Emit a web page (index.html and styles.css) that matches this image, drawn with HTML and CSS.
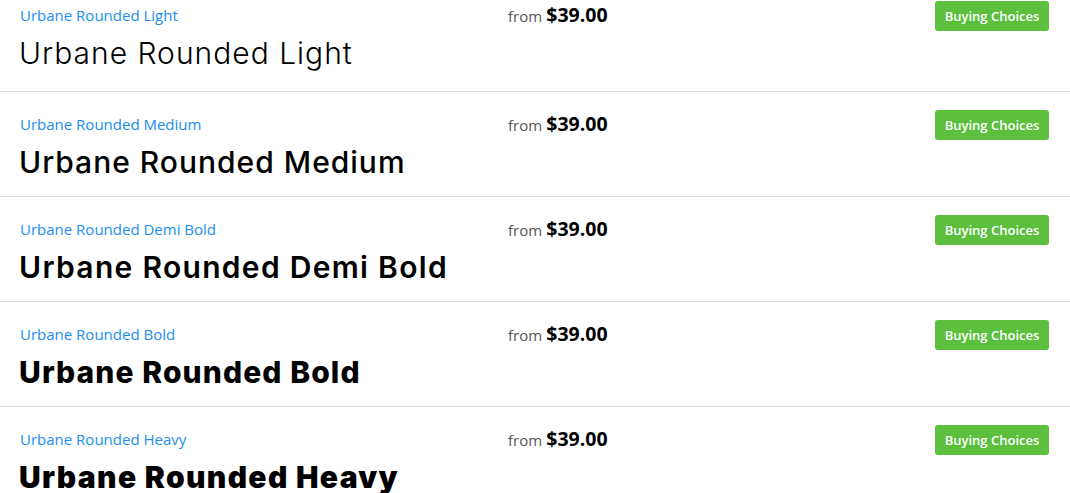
FILE: index.html
```html
<!DOCTYPE html>
<html>
<head>
<meta charset="utf-8">
<link rel="stylesheet" href="styles.css">
</head>
<body>
<div class="list">
  <div class="row row-first">
    <a class="link" href="#">Urbane Rounded Light</a>
    <div class="price"><span class="from">from</span> <span class="amount">$39.00</span></div>
    <div class="actions"><button class="buy">Buying Choices</button></div>
    <div class="name w-light">Urbane Rounded Light</div>
  </div>
  <div class="row">
    <a class="link" href="#">Urbane Rounded Medium</a>
    <div class="price"><span class="from">from</span> <span class="amount">$39.00</span></div>
    <div class="actions"><button class="buy">Buying Choices</button></div>
    <div class="name w-medium">Urbane Rounded Medium</div>
  </div>
  <div class="row">
    <a class="link" href="#">Urbane Rounded Demi Bold</a>
    <div class="price"><span class="from">from</span> <span class="amount">$39.00</span></div>
    <div class="actions"><button class="buy">Buying Choices</button></div>
    <div class="name w-demi">Urbane Rounded Demi Bold</div>
  </div>
  <div class="row">
    <a class="link" href="#">Urbane Rounded Bold</a>
    <div class="price"><span class="from">from</span> <span class="amount">$39.00</span></div>
    <div class="actions"><button class="buy">Buying Choices</button></div>
    <div class="name w-bold">Urbane Rounded Bold</div>
  </div>
  <div class="row">
    <a class="link" href="#">Urbane Rounded Heavy</a>
    <div class="price"><span class="from">from</span> <span class="amount">$39.00</span></div>
    <div class="actions"><button class="buy">Buying Choices</button></div>
    <div class="name w-heavy">Urbane Rounded Heavy</div>
  </div>
</div>
</body>
</html>
```
FILE: styles.css
```css
html, body {
  margin: 0;
  padding: 0;
  background: #fff;
}
body {
  font-family: "Open Sans", "Liberation Sans", sans-serif;
  color: #000;
}
.list {
  display: flex;
  flex-direction: column;
}
.row {
  display: grid;
  grid-template-columns: 488px 1fr auto;
  grid-template-rows: 30px auto;
  align-items: center;
  align-content: start;
  padding: 18px 21px 0 20px;
  border-bottom: 1px solid #dcdcdc;
  height: 105px;
  box-sizing: border-box;
}
.row-first {
  padding-top: 1px;
  height: 92px;
}
.link {
  color: #1a8ef2;
  text-decoration: none;
  font-size: 15px;
  margin-bottom: 2px;
}
.price {
  white-space: nowrap;
  margin-bottom: 4px;
}
.from {
  color: #555;
  font-size: 15px;
}
.amount {
  font-weight: 700;
  font-size: 19.5px;
  color: #000;
}
.actions {
  display: flex;
  justify-content: flex-end;
}
.buy {
  background: #5cbf3e;
  color: #fff;
  border: none;
  border-radius: 3px;
  width: 114px;
  height: 30px;
  font-family: "Open Sans", "Liberation Sans", sans-serif;
  font-weight: 600;
  font-size: 13px;
  padding: 0;
}
.name {
  grid-column: 1 / -1;
  font-family: Inter, "Noto Sans", sans-serif;
  font-size: 30px;
  line-height: 40px;
  margin-top: 2px;
  margin-left: -1px;
  letter-spacing: 1px;
  color: #000;
}
.w-light { font-weight: 300; }
.w-medium { font-weight: 500; }
.w-demi { font-weight: 600; letter-spacing: 1.3px; }
.w-bold { font-weight: 800; letter-spacing: 1.1px; }
.w-heavy { font-weight: 900; letter-spacing: 1.35px; }
```
